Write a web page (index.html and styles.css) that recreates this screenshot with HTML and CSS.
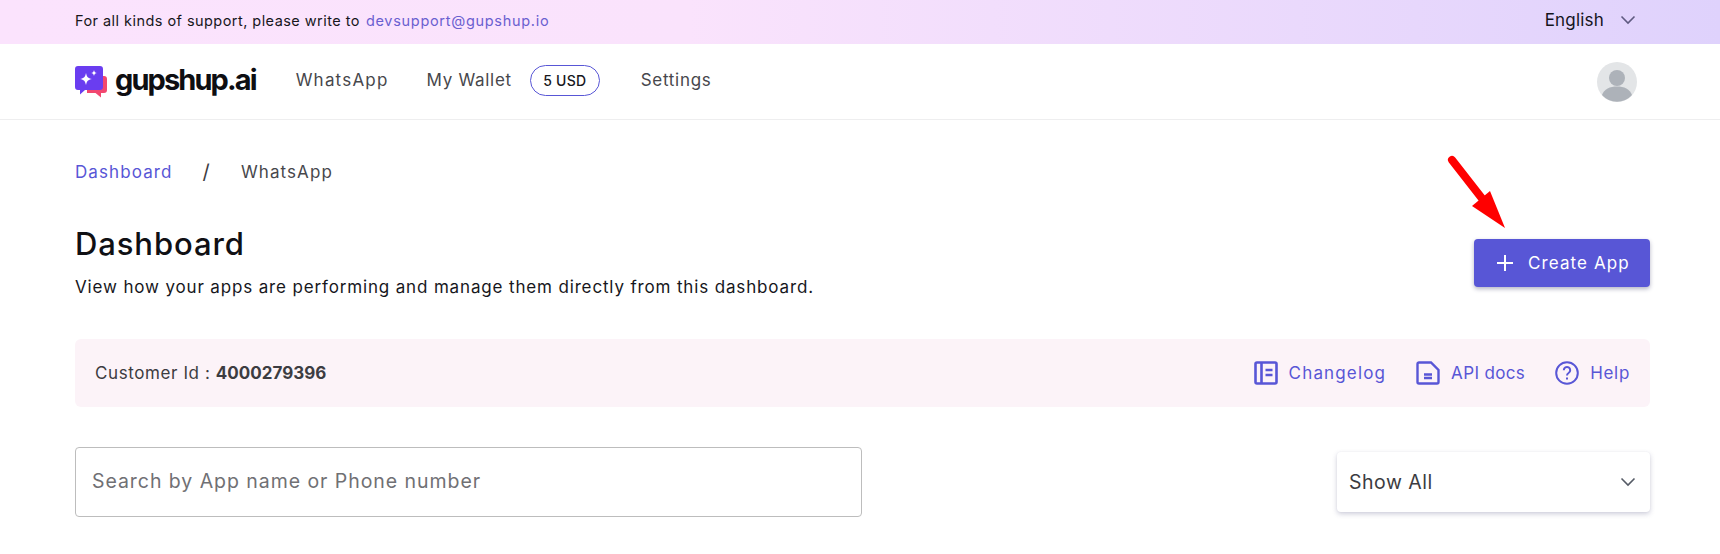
FILE: index.html
```html
<!DOCTYPE html>
<html lang="en">
<head>
<meta charset="utf-8">
<title>Dashboard</title>
<link rel="stylesheet" href="styles.css">
</head>
<body>
<div class="topbar">
  <div class="support"><span>For all kinds of support, please write to</span><a class="support-mail">devsupport@gupshup.io</a></div>
  <div class="lang"><span>English</span>
    <svg class="lang-chev" width="16" height="10" viewBox="0 0 16 10"><path d="M1.5 1.5 8 8l6.500-6.500" fill="none" stroke="#5f5a80" stroke-width="1.600"/></svg>
  </div>
</div>
<header class="nav">
  <div class="logo">
    <svg width="32" height="32" viewBox="0 0 32 32">
      <path d="M12 10h17a3 3 0 0 1 3 3v11a3 3 0 0 1-3 3h-3v4.500L20.500 27H12z" fill="#f2476f"/>
      <path d="M3 0h22a3 3 0 0 1 3 3v18a3 3 0 0 1-3 3H10l-5 4.500V24H3a3 3 0 0 1-3-3V3a3 3 0 0 1 3-3z" fill="#6a3df0"/>
      <path d="M11 7c.8 4 2 5.200 6 6-4 .8-5.200 2-6 6-.8-4-2-5.200-6-6 4-.8 5.200-2 6-6z" fill="#fff"/>
      <path d="M19 4c.4 2 1 2.600 3 3-2 .4-2.600 1-3 3-.4-2-1-2.600-3-3 2-.4 2.600-1 3-3z" fill="#fff"/>
    </svg>
    <span class="logo-text">gupshup.ai</span>
  </div>
  <nav class="menu">
    <a class="menu-item menu-whatsapp">WhatsApp</a>
    <a class="menu-item">My Wallet</a>
    <span class="pill">5 USD</span>
    <a class="menu-item menu-settings">Settings</a>
  </nav>
  <div class="avatar">
    <svg width="40" height="40" viewBox="0 0 40 40"><circle cx="20" cy="20" r="20" fill="#e3e5e7"/><circle cx="20" cy="16" r="8" fill="#adb2b9"/><path d="M5 33c2-6 8-8.500 15-8.500S33 27 35 33a20 20 0 0 1-30 0z" fill="#adb2b9"/></svg>
  </div>
</header>
<main class="content">
  <div class="crumbs"><a class="crumb-link">Dashboard</a><span class="crumb-sep">/</span><span>WhatsApp</span></div>
  <div class="head">
    <div>
      <h1 class="title">Dashboard</h1>
      <p class="sub">View how your apps are performing and manage them directly from this dashboard.</p>
    </div>
    <button class="create">
      <svg width="16" height="16" viewBox="0 0 16 16"><path d="M8 0v16M0 8h16" stroke="#fff" stroke-width="2"/></svg>
      <span>Create App</span>
    </button>
  </div>
  <section class="banner">
    <div class="cust"><span class="cust-label">Customer Id : </span><b>4000279396</b></div>
    <div class="links">
      <a class="link link-wide"><svg width="24" height="24" viewBox="0 0 24 24" fill="none" stroke="#5856d6" stroke-width="2.600"><rect x="1.500" y="1.500" width="21" height="21" rx="1.500"/><path d="M7.500 1.500v21M11.500 9h7M11.500 14h7"/></svg><span>Changelog</span></a>
      <a class="link link-tight"><svg width="24" height="24" viewBox="0 0 24 24" fill="none" stroke="#5856d6" stroke-width="2.400"><path d="M3 1.500h12l7.500 7.500v12a1.500 1.500 0 0 1-1.500 1.500H3A1.500 1.500 0 0 1 1.500 21V3A1.500 1.500 0 0 1 3 1.500z"/><path d="M8 13.500h8M8 17h8"/></svg><span>API docs</span></a>
      <a class="link"><svg width="24" height="24" viewBox="0 0 24 24" fill="none" stroke="#5856d6" stroke-width="2"><circle cx="12" cy="12" r="10.800"/><path d="M8.800 9.200a3.200 3.200 0 1 1 4.800 2.800c-1 .6-1.600 1.200-1.600 2.400"/><path d="M12 16.500v2" /></svg><span>Help</span></a>
    </div>
  </section>
  <div class="filters">
    <div class="search">Search by App name or Phone number</div>
    <div class="select"><span>Show All</span>
      <svg width="16" height="10" viewBox="0 0 16 10"><path d="M1.500 1.500 8 8l6.500-6.500" fill="none" stroke="#555b66" stroke-width="1.600"/></svg>
    </div>
  </div>
</main>
<svg class="arrow" width="80" height="90" viewBox="0 0 80 90"><path d="M6 6 L38 47" stroke="#f00" stroke-width="8" stroke-linecap="round"/><path d="M26 52 L44 37 L59 74z" fill="#f00"/></svg>
</body>
</html>
```

FILE: styles.css
```css
* { box-sizing: border-box; }
html, body { margin: 0; padding: 0; }
body { position: relative; width: 1720px; height: 554px; overflow: hidden; background: #fff; font-family: "Inter", "Open Sans", sans-serif; color: #3c3c41; font-size: 16px; }
a { text-decoration: none; }

.topbar { height: 44px; padding: 0 84px 4px 75px; display: flex; align-items: center; justify-content: space-between; background: linear-gradient(90deg, #fbe3fd 0%, #fae3fc 40%, #dfd2fc 100%); }
.support { display: flex; gap: 6px; font-size: 14.500px; letter-spacing: .45px; color: #17171c; }
.support-mail { color: #6a5fd0; letter-spacing: .7px; }
.lang { display: flex; align-items: center; gap: 16px; font-size: 17px; letter-spacing: .2px; color: #15151c; }

.nav { height: 76px; padding: 0 83px 0 75px; display: flex; align-items: center; border-bottom: 1px solid #eeeeef; }
.logo { display: flex; align-items: center; gap: 8px; margin-right: 40px; }
.logo-text { font-weight: 700; font-size: 29px; letter-spacing: -1.900px; color: #0e0e12; line-height: 32px; margin-bottom: 4px; }
.menu { display: flex; align-items: center; margin-bottom: 3px; font-size: 17px; letter-spacing: .7px; }
.menu-item { color: #47474c; }
.menu-whatsapp { letter-spacing: 1.200px; }
.menu-item + .menu-item { margin-left: 38px; }
.pill { margin-left: 18px; width: 70px; height: 31px; border: 1px solid #5856d6; border-radius: 16px; display: flex; align-items: center; justify-content: center; font-size: 14px; font-weight: 500; letter-spacing: .2px; color: #17171c; }
.menu-item.menu-settings { margin-left: 41px; }
.avatar { margin-left: auto; width: 40px; height: 40px; }
.avatar svg { display: block; }

.content { padding: 0 70px 0 75px; }
.crumbs { padding-top: 41px; height: 64px; display: flex; font-size: 17px; letter-spacing: 1.100px; line-height: 22px; color: #47474c; }
.crumb-link { color: #5856d6; }
.crumb-sep { margin: 0 30px; color: #3c3c41; font-size: 20px; }
.head { margin-top: 55px; display: flex; justify-content: space-between; align-items: flex-start; height: 100px; }
.title { margin: -13px 0 0; font-size: 31px; font-weight: 500; letter-spacing: .9px; line-height: 36px; color: #101014; }
.sub { margin: 13px 0 0; font-size: 17px; letter-spacing: .85px; line-height: 24px; color: #17171c; }
.create { width: 176px; height: 48px; border: 0; border-radius: 4px; background: #5856d6; color: #fff; display: flex; align-items: center; justify-content: flex-start; padding: 0 0 0 23px; gap: 15px; font: inherit; font-size: 17px; letter-spacing: 1.100px; box-shadow: 0 2px 4px rgba(40,40,90,.35); }
.banner { height: 68px; padding: 0 20px; display: flex; align-items: center; justify-content: space-between; background: #fcf3f8; border-radius: 6px; }
.cust { font-size: 17px; color: #3c3c41; }
.cust-label { letter-spacing: .6px; }
.cust b { font-weight: 700; }
.links { display: flex; gap: 30px; }
.link { display: flex; align-items: center; gap: 11px; color: #5856d6; font-size: 17px; letter-spacing: .7px; }
.link-wide { letter-spacing: 1.150px; }
.link-tight { letter-spacing: .35px; }
.filters { margin-top: 40px; display: flex; justify-content: space-between; align-items: center; }
.search { width: 787px; height: 70px; border: 1px solid #bdbdbd; border-radius: 4px; padding: 0 16px 2px; display: flex; align-items: center; font-size: 19.500px; letter-spacing: .95px; color: #707074; }
.select { width: 313px; height: 60px; border-radius: 4px; padding: 0 14px 0 12px; display: flex; align-items: center; justify-content: space-between; font-size: 19.500px; letter-spacing: .5px; color: #3c3c41; background: #fff; box-shadow: 0 2px 5px rgba(60,60,110,.25), 0 0 2px rgba(60,60,110,.06); }
.arrow { position: absolute; left: 1446px; top: 154px; }
```
